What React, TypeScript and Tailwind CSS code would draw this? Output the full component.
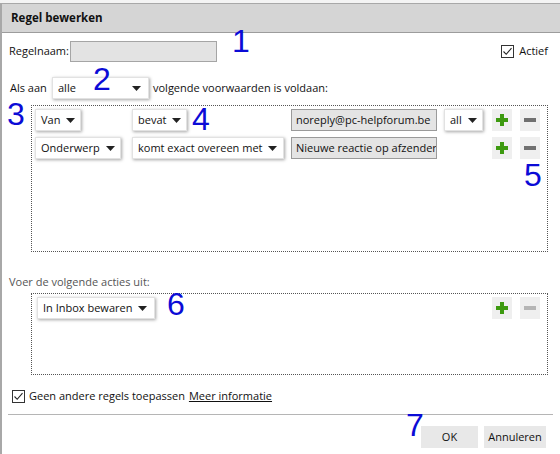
import React from "react";

const font = { fontFamily: '"Open Sans", "Noto Sans", sans-serif' };

function Arrow() {
  return (
    <svg width="9" height="5" viewBox="0 0 9 5" className="shrink-0">
      <polygon points="0,0 9,0 4.5,5" fill="#222" />
    </svg>
  );
}

function Drop({ label, w }: { label: string; w: string }) {
  return (
    <div
      className={`${w} h-[22px] bg-white flex items-center justify-between pl-[5px] pr-[7px] text-[11px] text-[#111] shadow-[1px_1px_3px_rgba(0,0,0,0.35)] border border-[#e2e2e2]`}
    >
      <span className="whitespace-nowrap">{label}</span>
      <span className="ml-[6px]">
        <Arrow />
      </span>
    </div>
  );
}

function Plus() {
  return (
    <div className="w-[20px] h-[22px] bg-[#efefef] flex items-center justify-center">
      <svg width="12" height="12" viewBox="0 0 12 12">
        <rect x="4" y="0" width="4" height="12" fill="#3d9a10" />
        <rect x="0" y="4" width="12" height="4" fill="#3d9a10" />
      </svg>
    </div>
  );
}

function Minus({ disabled = false }: { disabled?: boolean }) {
  return (
    <div className="w-[20px] h-[22px] bg-[#efefef] flex items-center justify-center">
      <svg width="12" height="4" viewBox="0 0 12 4">
        <rect x="0" y="0" width="12" height="4" fill={disabled ? "#b5b5b5" : "#707070"} />
      </svg>
    </div>
  );
}

function Check() {
  return (
    <div className="w-[13px] h-[13px] border border-[#333] bg-white flex items-center justify-center">
      <svg width="11" height="11" viewBox="0 0 11 11">
        <polyline points="1.5,5.5 4.2,8.3 9.5,2.2" fill="none" stroke="#222" strokeWidth="1.1" />
      </svg>
    </div>
  );
}

function Num({ n, cls }: { n: string; cls: string }) {
  return (
    <div
      className={`absolute text-[32px] leading-none text-[#0b0bd6] ${cls}`}
      style={{ fontFamily: '"Liberation Sans", Arial, sans-serif' }}
    >
      {n}
    </div>
  );
}

export default function App() {
  return (
    <div className="w-[560px] h-[454px] bg-white relative overflow-hidden" style={font}>
      <div className="h-[3px] bg-[#f4f4f4]" />
      <div className="h-[451px] border-l-[2px] border-t border-[#a8a8a8] flex flex-col">
        <div className="h-[29px] bg-[#d5d5d5] border-b border-[#9c9c9c] flex items-center pl-[9px] text-[11.5px] font-bold text-[#111]">
          Regel bewerken
        </div>

        <div className="flex items-center mt-[8px] pl-[7px] pr-[12px] h-[21px]">
          <span className="text-[11px] text-[#111]">Regelnaam:</span>
          <div className="w-[147px] h-[21px] bg-[#e3e3e3] border border-[#a5a5a5] ml-[1px]" />
          <div className="flex-1" />
          <Check />
          <span className="text-[11px] text-[#111] ml-[5px]">Actief</span>
        </div>

        <div className="flex items-center mt-[15px] pl-[8px] h-[22px]">
          <span className="text-[11px] text-[#111] w-[42px]">Als aan</span>
          <Drop label="alle" w="w-[97px]" />
          <span className="text-[11px] text-[#111] ml-[4px]">volgende voorwaarden is voldaan:</span>
        </div>

        <div className="ml-[29px] mr-[12px] mt-[6px] h-[147px] border border-dotted border-[#555] pt-[3px] pl-[3px] flex flex-col gap-[6px]">
          <div className="flex items-center">
            <div className="w-[97px]">
              <Drop label="Van" w="w-[46px]" />
            </div>
            <div className="w-[159px]">
              <Drop label="bevat" w="w-[55px]" />
            </div>
            <div className="w-[146px] h-[22px] bg-[#e4e4e4] border border-[#9a9a9a] flex items-center pl-[4px] text-[11px] text-[#111] overflow-hidden whitespace-nowrap">
              noreply@pc-helpforum.be
            </div>
            <div className="ml-[7px]">
              <Drop label="all" w="w-[39px]" />
            </div>
            <div className="ml-[9px]">
              <Plus />
            </div>
            <div className="ml-[8px]">
              <Minus />
            </div>
          </div>
          <div className="flex items-center">
            <div className="w-[97px]">
              <Drop label="Onderwerp" w="w-[86px]" />
            </div>
            <div className="w-[159px]">
              <Drop label="komt exact overeen met" w="w-[152px]" />
            </div>
            <div className="w-[146px] h-[22px] bg-[#e4e4e4] border border-[#9a9a9a] flex items-center pl-[4px] text-[11px] text-[#111] overflow-hidden whitespace-nowrap">
              Nieuwe reactie op afzender v
            </div>
            <div className="w-[39px] ml-[7px]" />
            <div className="ml-[9px]">
              <Plus />
            </div>
            <div className="ml-[8px]">
              <Minus />
            </div>
          </div>
        </div>

        <div className="mt-[22px] pl-[7px] text-[11px] text-[#555] leading-[16px]">Voer de volgende acties uit:</div>

        <div className="ml-[29px] mr-[12px] mt-[3px] h-[82px] border border-dotted border-[#555] pt-[3px] pl-[5px] pr-[7px] flex items-start">
          <Drop label="In Inbox bewaren" w="w-[118px]" />
          <div className="flex-1" />
          <div className="mr-[8px]">
            <Plus />
          </div>
          <Minus disabled />
        </div>

        <div className="flex items-center mt-[13px] pl-[10px] h-[16px]">
          <Check />
          <span className="text-[11px] text-[#111] ml-[4px]">Geen andere regels toepassen</span>
          <span className="text-[11px] text-[#111] ml-[4px] underline">Meer informatie</span>
        </div>

        <div className="mt-[10px] ml-[6px] mr-[7px] border-t border-[#b5b5b5]" />

        <div className="flex justify-end mt-[11px] pr-[14px] gap-[6px]">
          <div className="w-[57px] h-[22px] bg-[#e8e8e8] flex items-center justify-center text-[11px] text-[#111]">OK</div>
          <div className="w-[62px] h-[22px] bg-[#e8e8e8] flex items-center justify-center text-[11px] text-[#111]">Annuleren</div>
        </div>
      </div>

      <Num n="1" cls="left-[232px] top-[25px]" />
      <Num n="2" cls="left-[93px] top-[63px]" />
      <Num n="3" cls="left-[7px] top-[98px]" />
      <Num n="4" cls="left-[192px] top-[103px]" />
      <Num n="5" cls="left-[524px] top-[159px]" />
      <Num n="6" cls="left-[167px] top-[288px]" />
      <Num n="7" cls="left-[406px] top-[409px]" />
    </div>
  );
}
